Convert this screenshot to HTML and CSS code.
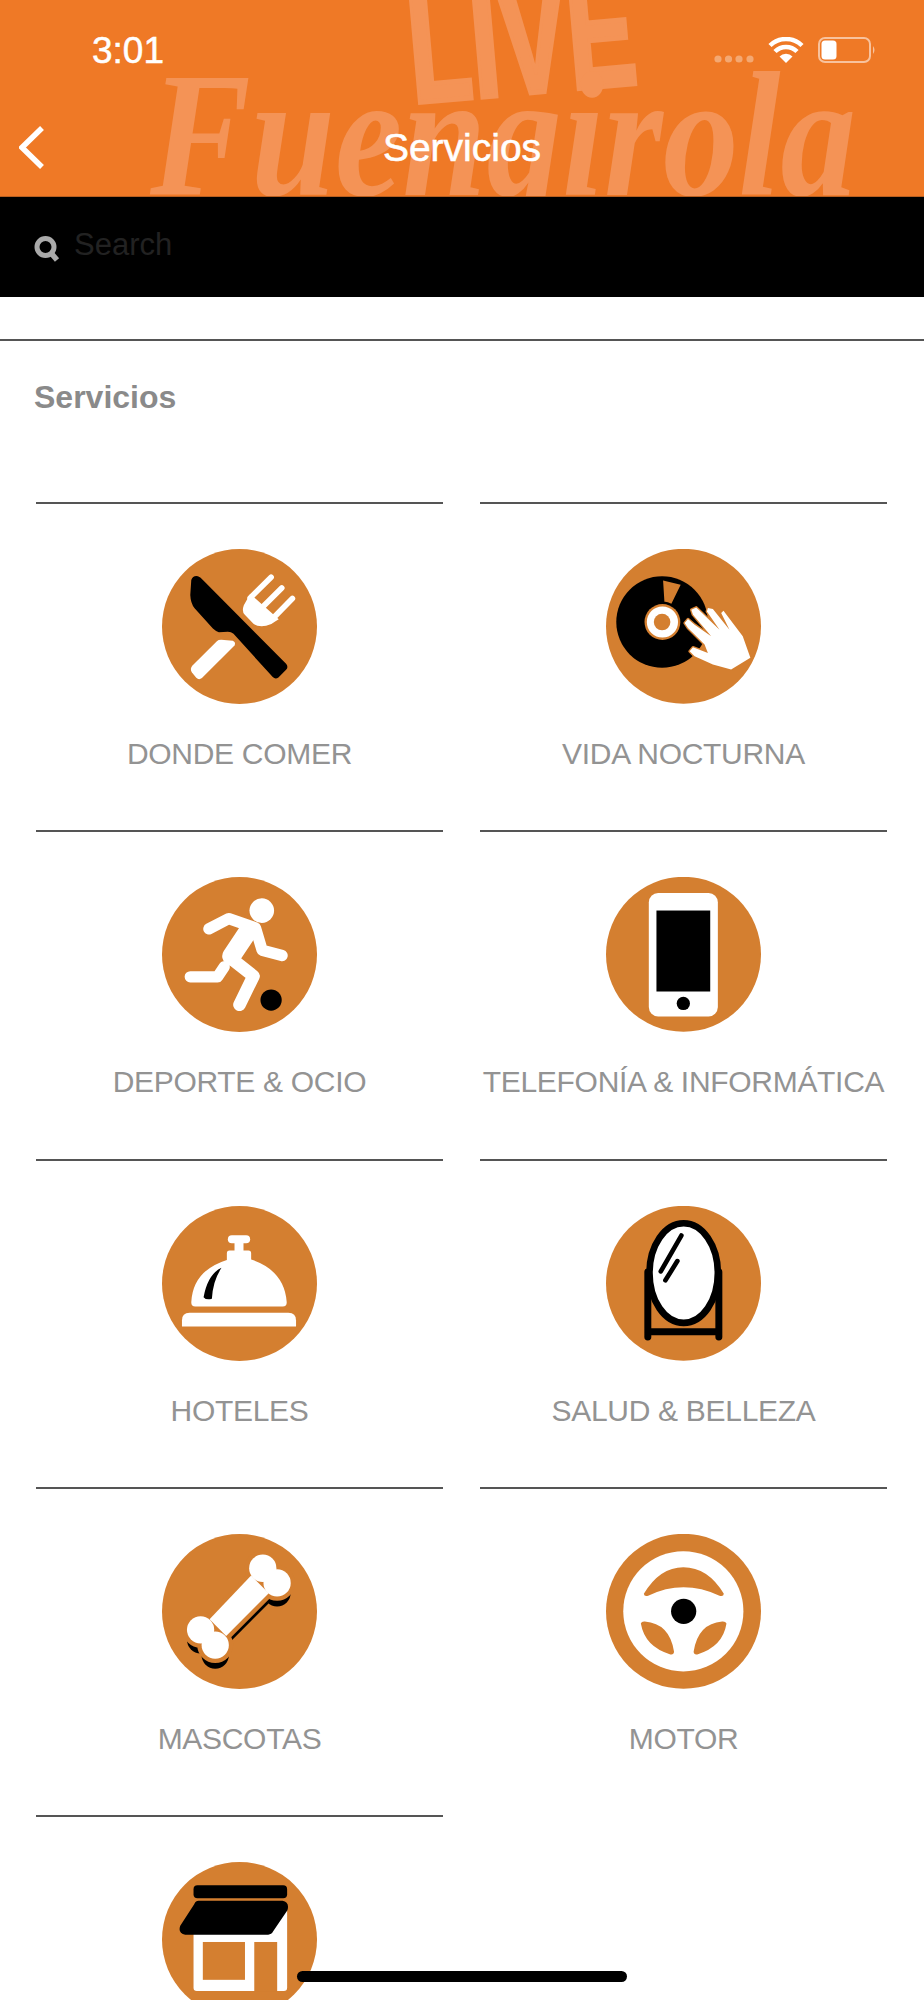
FILE: index.html
```html
<html lang="en">
	<head>
		<meta charset="UTF-8">
		<meta name="viewport" content="width=device-width, initial-scale=1">
		<title>Servicios</title>
		<link rel="stylesheet" href="styles.css">
	</head>
	<body>
		<header class="top">
			<div class="watermark" aria-hidden="true">
				<span class="wm-live">LIVE</span>
				<span class="wm-town">Fuengirola</span>
			</div>
			<div class="status">
				<span class="time">3:01</span>
				<div class="status-icons">
					<svg class="signal" viewBox="0 0 40 8"><g fill="#fff" opacity=".35"><circle cx="4" cy="4" r="3.6"/><circle cx="14.500" cy="4" r="3.6"/><circle cx="25" cy="4" r="3.6"/><circle cx="36" cy="4" r="3.6"/></g></svg>
					<svg class="wifi" viewBox="0 0 36 26"><path d="M18 26 11.500 19.500A9 9 0 0 1 24.500 19.500Z" fill="#fff"/><path d="M7 14.500A15.500 15.500 0 0 1 29 14.500M2 8.500A23 23 0 0 1 34 8.500" fill="none" stroke="#fff" stroke-width="4.500"/></svg>
					<svg class="battery" viewBox="0 0 58 26"><rect x="1" y="1" width="51" height="24" rx="6" fill="none" stroke="#fff" stroke-opacity=".55" stroke-width="2"/><rect x="3.500" y="3.500" width="15" height="19" rx="3.500" fill="#fff"/><path d="M55 9Q58 13 55 17Z" fill="#fff" opacity=".55"/></svg>
				</div>
			</div>
			<nav class="navbar">
				<svg class="back" viewBox="0 0 25 43"><path d="M23 2 3 21.500 23 41" fill="none" stroke="#fff" stroke-width="5.500"/></svg>
				<h1>Servicios</h1>
			</nav>
		</header>

		<div class="search">
			<svg class="search-icon" viewBox="0 0 26 26"><circle cx="11.500" cy="11" r="8.500" fill="none" stroke="#aaa" stroke-width="5"/><path d="M17 17 23 24" stroke="#aaa" stroke-width="5.500"/></svg>
			<span class="search-text">Search</span>
		</div>

		<main class="content">
			<h2 class="section-title">Servicios</h2>
			<ul class="grid">
				<li class="item">
					<svg class="icon" viewBox="97 57 466 466">
						<circle class="disc" cx="330" cy="290" r="233"/>
						<path d="M185 150Q190 136 205 139Q212 141 220 150L470 402Q478 412 470 420L447 443Q438 450 430 442L312 312Q305 306 295 306L268 307Q258 304 250 296L195 235Q183 220 182 195Z"/>
						<path class="w" d="M262 334Q266 330 275 330L310 333Q320 338 315 347L217 445Q208 452 200 444L187 428Q180 418 188 408Z"/>
						<path class="w" d="M362 192 343 226Q336 245 346 255L372 282Q385 292 410 288Q425 286 436 276L448 268Z"/>
						<path class="tine" d="M425 142 362 204M457 174 395 236M489 206 428 268"/>
					</svg>
					<span>DONDE COMER</span>
				</li>
				<li class="item">
					<svg class="icon" viewBox="78 57 467 467">
						<circle class="disc" cx="311.500" cy="290" r="233.500"/>
						<circle cx="247" cy="277" r="138"/>
						<path class="o" d="M250 152 303 165 275 222Q262 215 254 216Z"/>
						<circle class="o" cx="248" cy="277" r="54"/>
						<circle class="w" cx="248" cy="277" r="47"/>
						<circle class="o" cx="247" cy="277" r="25"/>
						<path class="w hand" d="M432 243 490 320 513 385 455 420 400 405 345 380 330 365 340 353 385 370 375 345 325 295 315 280 325 268 345 285 395 320 340 255 335 240 350 233 420 300 382 245 385 235 400 238 450 300 425 250Z"/>
					</svg>
					<span>VIDA NOCTURNA</span>
				</li>
				<li class="item">
					<svg class="icon" viewBox="97 52 466 466">
						<circle class="disc" cx="330" cy="285" r="233"/>
						<circle class="w" cx="397" cy="153" r="37"/>
						<path class="limb" d="M238 208 298 177 378 205 398 272 458 288"/>
						<path class="torso" d="M358 212 306 290"/>
						<path class="limb leg" d="M302 295 372 350 330 436"/>
						<path class="limb" d="M182 352H264L284 322"/>
						<circle cx="425" cy="422" r="32"/>
					</svg>
					<span>DEPORTE &amp; OCIO</span>
				</li>
				<li class="item">
					<svg class="icon" viewBox="78 52 467 467">
						<circle class="disc" cx="311.500" cy="285" r="233.500"/>
						<rect class="w" x="207" y="100" width="208" height="372" rx="28"/>
						<rect x="230" y="153" width="162" height="244"/>
						<circle cx="311" cy="433" r="20"/>
					</svg>
					<span>TELEFONÍA &amp; INFORMÁTICA</span>
				</li>
				<li class="item">
					<svg class="icon" viewBox="97 46 466 466">
						<circle class="disc" cx="330" cy="279" r="233"/>
						<rect class="w" x="295" y="134" width="67" height="24" rx="12"/>
						<rect class="w" x="315" y="150" width="27" height="35"/>
						<path class="w" d="M292 208V188Q292 180 300 180H357Q365 180 365 188V207Q465 240 472 335Q472 348 460 348H197Q185 348 185 335Q190 240 292 208Z"/>
						<path d="M276 232Q235 250 222 320Q230 330 247 325Q250 270 276 232Z"/>
						<path class="w" d="M157 408V390Q157 367 180 367H477Q500 367 500 390V408Z"/>
					</svg>
					<span>HOTELES</span>
				</li>
				<li class="item">
					<svg class="icon" viewBox="78 46 467 467">
						<circle class="disc" cx="311.500" cy="279" r="233.500"/>
						<path class="stand" d="M204 245V441M418 245V441M204 425H418"/>
						<ellipse class="mirror" cx="312" cy="248" rx="103" ry="150"/>
						<path class="glare" d="M305 135 243 243M293 212 257 270"/>
					</svg>
					<span>SALUD &amp; BELLEZA</span>
				</li>
				<li class="item">
					<svg class="icon" viewBox="97 40 466 466">
						<defs>
							<g id="bone">
								<circle cx="400" cy="143" r="41"/>
								<circle cx="443" cy="187" r="41"/>
								<circle cx="213" cy="328" r="41"/>
								<circle cx="257" cy="374" r="41"/>
								<path d="M365 165 418 218 290 347 240 296Z"/>
							</g>
						</defs>
						<circle class="disc" cx="330" cy="273" r="233"/>
						<use href="#bone" transform="translate(0 30)"/>
						<use href="#bone" class="bone-gap"/>
						<use href="#bone" class="w"/>
					</svg>
					<span>MASCOTAS</span>
				</li>
				<li class="item">
					<svg class="icon" viewBox="78 40 467 467">
						<circle class="disc" cx="311.500" cy="273" r="233.500"/>
						<circle class="w" cx="311" cy="273" r="181"/>
						<path class="o" d="M192 220Q240 140 311 140Q385 140 433 220Q432 230 420 226Q311 175 205 226Q193 230 192 220Z"/>
						<path class="o" d="M183 310Q185 303 195 304Q270 310 283 395Q282 405 272 403Q195 380 183 310Z"/>
						<path class="o" d="M441 310Q438 303 428 304Q355 310 342 395Q343 405 353 403Q430 380 441 310Z"/>
						<circle cx="312" cy="273" r="38"/>
					</svg>
					<span>MOTOR</span>
				</li>
				<li class="item">
					<svg class="icon" viewBox="95 63 467 467">
						<circle class="disc" cx="328.500" cy="296.500" r="233.500"/>
						<path class="w" d="M190 200H472V442Q472 452 462 452H200Q190 452 190 442Z"/>
						<rect class="o" x="218" y="304" width="127" height="114"/>
						<rect class="o" x="373" y="304" width="69" height="148"/>
						<rect x="190" y="133" width="282" height="39" rx="12"/>
						<path d="M205 180H458Q480 184 473 208L430 272Q425 282 415 282H165Q142 278 150 255L192 190Q197 180 205 180Z"/>
					</svg>
				</li>
			</ul>
		</main>

		<div class="home-bar"></div>
	</body>
</html>
```

FILE: styles.css
```css
html,
body {
	margin: 0;
	height: 2000px;
	overflow: hidden;
	background: #fff;
	font-family: "Liberation Sans", Arial, sans-serif;
}

.top {
	position: relative;
	height: 196px;
	overflow: hidden;
	background: #ef7926;
	color: #fff;
	border-bottom: 1px solid #b85f20;
}

/* brush lettering behind the bar */
.watermark {
	position: absolute;
	inset: 0;
	color: #f49356;
}
.wm-live {
	position: absolute;
	left: 415px;
	top: -32px;
	font-size: 160px;
	line-height: 1;
	font-weight: bold;
	-webkit-text-stroke: 5px #f49356;
	transform: rotate(-5deg) scaleX(.64);
	transform-origin: left bottom;
}
.wm-town {
	position: absolute;
	left: 150px;
	top: 46px;
	font-family: "Liberation Serif", serif;
	font-style: italic;
	font-weight: bold;
	font-size: 178px;
	line-height: 1;
	white-space: nowrap;
	transform: scaleX(.85);
	transform-origin: left top;
}

.status {
	position: relative;
	display: flex;
	justify-content: space-between;
	align-items: center;
	height: 26px;
	padding: 37px 48px 0 92px;
}
.time {
	font-size: 37px;
	margin-top: 2px;
	-webkit-text-stroke: .5px #fff;
}
.status-icons {
	display: flex;
	align-items: center;
	gap: 14px;
}
.signal {
	width: 40px;
	height: 8px;
	margin-top: 18px;
}
.wifi {
	width: 36px;
	height: 26px;
}
.battery {
	width: 58px;
	height: 26px;
}

.navbar {
	position: relative;
	display: flex;
	justify-content: center;
	align-items: center;
	height: 46px;
	margin-top: 62px;
}
.navbar h1 {
	margin: 0;
	font-size: 39px;
	font-weight: normal;
	line-height: 46px;
	-webkit-text-stroke: .6px #fff;
}
.back {
	position: absolute;
	left: 19px;
	top: 1px;
	width: 25px;
	height: 43px;
}

.search {
	display: flex;
	align-items: center;
	gap: 14px;
	height: 100px;
	padding-left: 34px;
	background: #000;
}
.search-icon {
	width: 26px;
	height: 26px;
	margin-top: 4px;
}
.search-text {
	font-size: 31px;
	color: #222;
	margin-bottom: 4px;
}

.content {
	margin-top: 42px;
	border-top: 2px solid #555;
}
.section-title {
	margin: 0;
	padding: 38px 34px 0;
	height: 161px;
	box-sizing: border-box;
	font-size: 32px;
	line-height: 36px;
	color: #8a8a8a;
}

.grid {
	display: grid;
	grid-template-columns: 407px 407px;
	grid-auto-rows: 328.300px;
	column-gap: 37px;
	margin: 0;
	padding: 0 0 0 36px;
	list-style: none;
}
.item {
	display: flex;
	flex-direction: column;
	align-items: center;
	box-sizing: border-box;
	padding-top: 45px;
	border-top: 2px solid #555;
}
.item span {
	margin-top: 32px;
	font-size: 30px;
	line-height: 36px;
	letter-spacing: -.3px;
	color: #939393;
	white-space: nowrap;
}

.icon {
	display: block;
	width: 155px;
	height: 155px;
}
.disc,
.o {
	fill: #d47f30;
}
.w {
	fill: #fff;
}
.hand {
	stroke: #d47f30;
	stroke-width: 8;
	stroke-linejoin: round;
	paint-order: stroke;
}
.tine {
	fill: none;
	stroke: #fff;
	stroke-width: 17;
	stroke-linecap: round;
}
.limb {
	fill: none;
	stroke: #fff;
	stroke-width: 34;
	stroke-linecap: round;
	stroke-linejoin: round;
}
.leg {
	stroke-width: 38;
}
.torso {
	stroke: #fff;
	stroke-width: 56;
	stroke-linecap: round;
}
.stand {
	fill: none;
	stroke: #000;
	stroke-width: 21;
	stroke-linecap: round;
}
.mirror {
	fill: #fff;
	stroke: #000;
	stroke-width: 20;
}
.glare {
	fill: none;
	stroke: #000;
	stroke-width: 14;
	stroke-linecap: round;
}
.bone-gap {
	fill: #d47f30;
	stroke: #d47f30;
	stroke-width: 26;
}

.home-bar {
	position: absolute;
	left: 297px;
	top: 1971px;
	width: 330px;
	height: 11px;
	border-radius: 6px;
	background: #000;
}
```
